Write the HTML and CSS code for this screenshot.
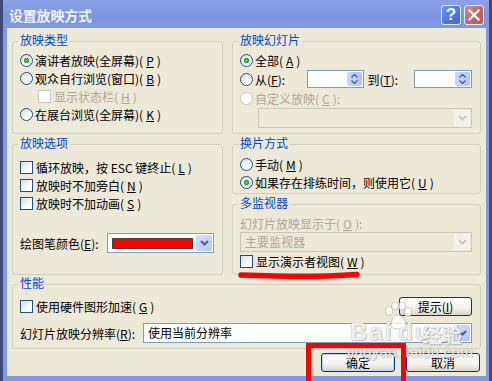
FILE: index.html
```html
<!DOCTYPE html>
<html lang="zh-CN">
<head>
    <meta charset="UTF-8">
    <title>设置放映方式</title>
    <link rel="stylesheet" href="styles.css">
</head>
<body>
    <div class="window">
        <div class="titlebar">
            <span class="title">设置放映方式</span>
            <span class="tb-btn help">?</span>
            <span class="tb-btn close">
                <svg width="12" height="12" viewBox="0 0 12 12"><path d="M1.5 1.5 L10.5 10.5 M10.5 1.5 L1.5 10.5" stroke="#fff" stroke-width="2.2" stroke-linecap="square"/></svg>
            </span>
        </div>

        <div class="client">
            <div class="row-top">
                <div class="group left">
                    <div class="group-title">放映类型</div>
                    <div class="opts mt4">
                        <div class="opt"><span class="radio on"></span>演讲者放映(全屏幕)(<u>P</u>)</div>
                        <div class="opt"><span class="radio"></span>观众自行浏览(窗口)(<u>B</u>)</div>
                        <div class="opt disabled indent"><span class="check"></span>显示状态栏(<u>H</u>)</div>
                        <div class="opt"><span class="radio"></span>在展台浏览(全屏幕)(<u>K</u>)</div>
                    </div>
                </div>

                <div class="group right">
                    <div class="group-title">放映幻灯片</div>
                    <div class="opts mt4">
                        <div class="opt"><span class="radio on"></span>全部(<u>A</u>)</div>
                        <div class="opt tall">
                            <span class="radio"></span>
                            <span class="lbl-from">从(<u>F</u>):</span>
                            <span class="spin"><span class="spin-btn"><svg width="7" height="4" viewBox="0 0 7 4"><path d="M0.5 3.5 L3.5 0.5 L6.5 3.5" fill="none" stroke="#4d6185" stroke-width="1.4"/></svg><svg width="7" height="4" viewBox="0 0 7 4"><path d="M0.5 0.5 L3.5 3.5 L6.5 0.5" fill="none" stroke="#4d6185" stroke-width="1.4"/></svg></span></span>
                            <span class="lbl-to">到(<u>T</u>):</span>
                            <span class="spin"><span class="spin-btn"><svg width="7" height="4" viewBox="0 0 7 4"><path d="M0.5 3.5 L3.5 0.5 L6.5 3.5" fill="none" stroke="#4d6185" stroke-width="1.4"/></svg><svg width="7" height="4" viewBox="0 0 7 4"><path d="M0.5 0.5 L3.5 3.5 L6.5 0.5" fill="none" stroke="#4d6185" stroke-width="1.4"/></svg></span></span>
                        </div>
                        <div class="opt disabled"><span class="radio"></span>自定义放映(<u>C</u>):</div>
                        <div class="combo disabled custom-show">
                            <span class="combo-text"></span>
                            <span class="combo-btn"><svg width="9" height="6" viewBox="0 0 9 6"><path d="M1 1 L4.5 4.5 L8 1" fill="none" stroke="#c9c7ba" stroke-width="2"/></svg></span>
                        </div>
                    </div>
                </div>
            </div>

            <div class="row-mid">
                <div class="group left">
                    <div class="group-title">放映选项</div>
                    <div class="opts mt8">
                        <div class="opt"><span class="check"></span>循环放映，按 ESC 键终止(<u>L</u>)</div>
                        <div class="opt"><span class="check"></span>放映时不加旁白(<u>N</u>)</div>
                        <div class="opt"><span class="check"></span>放映时不加动画(<u>S</u>)</div>
                    </div>
                    <div class="pen-row">
                        <span class="lbl-pen">绘图笔颜色(<u>E</u>):</span>
                        <div class="combo pen">
                            <span class="swatch"></span>
                            <span class="combo-btn"><svg width="9" height="6" viewBox="0 0 9 6"><path d="M1 1 L4.5 4.5 L8 1" fill="none" stroke="#4d6185" stroke-width="2"/></svg></span>
                        </div>
                    </div>
                </div>

                <div class="right-col">
                    <div class="group right advance">
                        <div class="group-title">换片方式</div>
                        <div class="opts mt5">
                            <div class="opt"><span class="radio"></span>手动(<u>M</u>)</div>
                            <div class="opt"><span class="radio on"></span>如果存在排练时间，则使用它(<u>U</u>)</div>
                        </div>
                    </div>
                    <div class="group right monitors">
                        <div class="group-title">多监视器</div>
                        <div class="opts mt4">
                            <div class="opt disabled">幻灯片放映显示于(<u>O</u>):</div>
                            <div class="combo disabled">
                                <span class="combo-text">主要监视器</span>
                                <span class="combo-btn"><svg width="9" height="6" viewBox="0 0 9 6"><path d="M1 1 L4.5 4.5 L8 1" fill="none" stroke="#c9c7ba" stroke-width="2"/></svg></span>
                            </div>
                            <div class="opt"><span class="check"></span>显示演示者视图(<u>W</u>)</div>
                        </div>
                    </div>
                </div>
            </div>

            <div class="group perf">
                <div class="group-title">性能</div>
                <div class="perf-row mt7">
                    <div class="opt"><span class="check"></span>使用硬件图形加速(<u>G</u>)</div>
                    <button class="btn tips">提示(<u>I</u>)</button>
                </div>
                <div class="perf-row mt7">
                    <span class="lbl-res">幻灯片放映分辨率(<u>R</u>):</span>
                    <div class="combo res">
                        <span class="combo-text">使用当前分辨率</span>
                        <span class="combo-btn"><svg width="9" height="6" viewBox="0 0 9 6"><path d="M1 1 L4.5 4.5 L8 1" fill="none" stroke="#4d6185" stroke-width="2"/></svg></span>
                    </div>
                </div>
            </div>

            <div class="buttons">
                <button class="btn default">确定</button>
                <button class="btn">取消</button>
            </div>
        </div>
    </div>

    <!-- 水印和红色标注 -->
    <div class="watermark">
        <span class="wm-bai">Bai</span>
        <svg class="wm-paw" width="30" height="28" viewBox="0 0 30 28">
            <ellipse cx="7" cy="9" rx="3.5" ry="4.5"/>
            <ellipse cx="13" cy="4" rx="3.5" ry="4"/>
            <ellipse cx="20" cy="4" rx="3.5" ry="4"/>
            <ellipse cx="26" cy="10" rx="3.5" ry="4.5"/>
            <path d="M9 24 C9 16 13 13 16 13 C20 13 24 17 24 24 C24 28 9 28 9 24 Z"/>
        </svg>
        <span class="wm-du">du</span>
        <span class="wm-jy">经验</span>
        <span class="wm-url">jingyan.baidu.com</span>
    </div>
    <svg class="scribble" width="124" height="12" viewBox="0 0 124 12">
        <path d="M3 6 C30 7 60 8 90 7 C104 6.5 112 6 119 5.5" fill="none" stroke="#ff0000" stroke-width="5.5" stroke-linecap="round"/>
    </svg>
    <div class="highlight"></div>
</body>
</html>
```

FILE: styles.css
```css
* {
    box-sizing: border-box;
}
body {
    margin: 0;
    width: 492px;
    height: 381px;
    overflow: hidden;
    position: relative;
    background: #3d4a78;
    font-family: "Noto Sans CJK SC", "Noto Sans", sans-serif;
    font-size: 12px;
    color: #000;
}
u {
    text-decoration-thickness: 1px;
    text-underline-offset: 1px;
}

/* 窗口框和标题栏 */
.window {
    margin-left: 3px;
    width: 486px;
    height: 381px;
    background: #8099e2;
    border-bottom: 5px solid #8099e2;
}
.titlebar {
    height: 28px;
    display: flex;
    align-items: flex-start;
    padding: 5px 5px 0 6px;
    background: linear-gradient(#8aa3e8, #7b95de 60%, #7f98e0);
}
.title {
    flex: 1;
    color: #eef2fc;
    font-size: 14px;
    font-weight: bold;
    line-height: 20px;
    letter-spacing: -0.2px;
}
.tb-btn {
    width: 20px;
    height: 20px;
    border: 1px solid #e6ecfa;
    border-radius: 3px;
    display: flex;
    align-items: center;
    justify-content: center;
    color: #fff;
}
.help {
    margin-right: 3px;
    background: linear-gradient(135deg, #6f95f0, #4a74e4 60%, #3f66d8);
    font-family: "Liberation Sans", sans-serif;
    font-weight: bold;
    font-size: 17px;
}
.close {
    background: linear-gradient(135deg, #d88a8c, #c06468 60%, #b45a60);
}

.client {
    margin: 0 3px 0 4px;
    height: 348px;
    background: #ece9d8;
    padding: 13px 5px 0 5px;
}

/* 分组框 */
.group {
    border: 1px solid #d0d0bf;
    border-radius: 3px;
    padding: 0 8px 0 7px;
}
.group.left {
    width: 211px;
}
.group.right {
    width: 249px;
}
.group-title {
    width: fit-content;
    height: 14px;
    line-height: 14px;
    margin: -9px 0 0 -2px;
    padding: 0 2px;
    background: #ece9d8;
    color: #0046d5;
}
.row-top {
    display: flex;
    gap: 9px;
    height: 93px;
}
.row-top .group {
    height: 93px;
}
.row-mid {
    display: flex;
    gap: 9px;
    margin-top: 10px;
    height: 131px;
}
.row-mid .group.left {
    height: 131px;
}
.right-col {
    display: flex;
    flex-direction: column;
    gap: 10px;
}
.advance {
    height: 50px;
}
.monitors {
    height: 71px;
}
.perf {
    margin-top: 9px;
    height: 65px;
}

.mt4 { margin-top: 4px; }
.mt5 { margin-top: 5px; }
.mt7 { margin-top: 7px; }
.mt8 { margin-top: 8px; }

.opt {
    display: flex;
    align-items: center;
    gap: 3px;
    height: 18px;
    white-space: nowrap;
}
.opt.tall {
    height: 20px;
}
.opt.indent {
    margin-left: 18px;
}
.disabled {
    color: #aca899;
}

/* 单选框和复选框 */
.radio {
    width: 13px;
    height: 13px;
    flex: none;
    border: 1px solid #1c5180;
    border-radius: 50%;
    margin-right: -1px;
    background: linear-gradient(135deg, #d8d8d2, #ffffff 70%);
}
.radio.on {
    background: radial-gradient(circle, #5cd85a 0, #21a121 2.3px, rgba(33,161,33,0) 3px), linear-gradient(135deg, #d8d8d2, #ffffff 70%);
}
.check {
    width: 13px;
    height: 13px;
    flex: none;
    border: 1px solid #1c5180;
    background: linear-gradient(135deg, #dcdcd7, #ffffff 75%);
}
.disabled .radio,
.disabled .check {
    border-color: #cac8bb;
    background: #fff;
}

/* 微调框 */
.lbl-from {
    width: 50px;
}
.lbl-to {
    width: 45px;
}
.spin {
    width: 59px;
    height: 18px;
    border: 1px solid #7f9db9;
    background: #fff;
    padding: 1px;
    display: flex;
    justify-content: flex-end;
}
.spin-btn {
    width: 15px;
    border-radius: 2px;
    background: linear-gradient(90deg, #c6d6fc, #b2c6f5);
    display: flex;
    flex-direction: column;
    align-items: center;
    justify-content: center;
    gap: 2px;
}

/* 下拉框 */
.combo {
    display: flex;
    height: 20px;
    border: 1px solid #7f9db9;
    background: #fff;
    padding: 1px;
}
.combo-text {
    flex: 1;
    line-height: 16px;
    padding-left: 3px;
    white-space: nowrap;
}
.combo-btn {
    width: 16px;
    border-radius: 2px;
    background: linear-gradient(135deg, #d2defc, #b4c8f5);
    display: flex;
    align-items: center;
    justify-content: center;
}
.combo.disabled {
    border-color: #c9c7ba;
    background: #ece9d8;
    color: #aca899;
}
.combo.disabled .combo-btn {
    background: #f2f1ea;
}
.custom-show {
    margin: 1px 0 0 18px;
}
.pen-row {
    display: flex;
    align-items: center;
    margin-top: 21px;
    height: 20px;
}
.lbl-pen {
    width: 87px;
    white-space: nowrap;
}
.combo.pen {
    width: 107px;
    align-items: center;
}
.swatch {
    width: 81px;
    height: 11px;
    margin: 0 3px;
    background: #ff0000;
    border: 1px solid #5a3a3a;
}
.combo.pen .combo-btn {
    height: 16px;
}

.perf-row {
    display: flex;
    align-items: center;
    justify-content: space-between;
    height: 19px;
}
.perf-row + .perf-row {
    height: 20px;
}
.lbl-res {
    width: 123px;
    flex: none;
    white-space: nowrap;
}
.combo.res {
    flex: 1;
}

/* 按钮 */
.btn {
    height: 19px;
    padding: 0;
    border: 1px solid #003c74;
    border-radius: 3px;
    background: linear-gradient(#ffffff, #f3f2ec 60%, #d8d3c6);
    font-family: "Noto Sans CJK SC", sans-serif;
    font-size: 12px;
    color: #000;
}
.tips {
    width: 73px;
}
.buttons {
    display: flex;
    justify-content: flex-end;
    gap: 11px;
    margin-top: 4px;
    padding-right: 1px;
}
.buttons .btn {
    width: 74px;
}
.btn.default {
    box-shadow: inset 0 0 0 1px #c2d2f6;
}

/* 水印 */
.watermark {
    position: absolute;
    left: 330px;
    top: 298px;
    width: 150px;
    height: 70px;
    color: rgba(255, 255, 255, 0.85);
    text-shadow: 0 0 1px rgba(120, 120, 120, 0.7), 1px 1px 1px rgba(150, 150, 150, 0.5);
    pointer-events: none;
}
.wm-bai,
.wm-du {
    position: absolute;
    top: 20px;
    font-family: "Liberation Sans", sans-serif;
    font-weight: bold;
    font-size: 24px;
    letter-spacing: 2px;
}
.wm-bai {
    left: 20px;
}
.wm-du {
    left: 68px;
}
.wm-paw {
    position: absolute;
    left: 52px;
    top: 4px;
    fill: rgba(255, 255, 255, 0.8);
    stroke: rgba(150, 150, 150, 0.6);
    stroke-width: 0.8;
}
.wm-jy {
    position: absolute;
    left: 92px;
    top: 22px;
    font-size: 20px;
    font-weight: bold;
}
.wm-url {
    position: absolute;
    left: 17px;
    top: 45px;
    font-family: "Liberation Sans", sans-serif;
    font-size: 15px;
    letter-spacing: 0.3px;
}

/* 红色标注 */
.scribble {
    position: absolute;
    left: 238px;
    top: 269px;
}
.highlight {
    position: absolute;
    left: 306px;
    top: 343px;
    width: 100px;
    height: 45px;
    border: 5px solid #ff0000;
}
```
